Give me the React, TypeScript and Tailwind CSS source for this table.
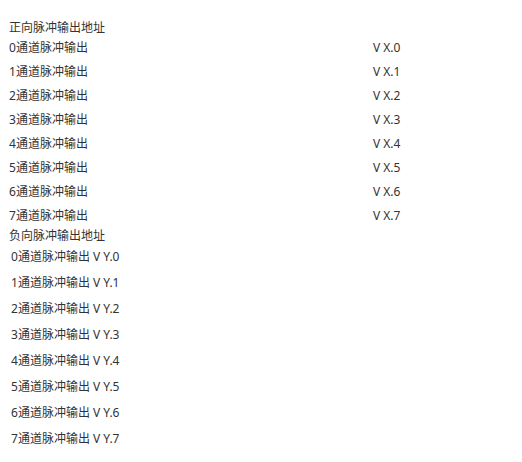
export default function App() {
  const ch = [0, 1, 2, 3, 4, 5, 6, 7];
  return (
    <div
      className="w-[522px] h-[462px] bg-white text-[#333] text-[12px] pt-[20px] pl-[9px]"
      style={{ fontFamily: '"Noto Sans", "Noto Sans CJK SC", sans-serif' }}
    >
      <div className="h-[16px] leading-[16px]">正向脉冲输出地址</div>
      {ch.map((i) => (
        <div key={i} className="flex h-[24px] items-center">
          <div className="w-[364px]">{i}通道脉冲输出</div>
          <div>V X.{i}</div>
        </div>
      ))}
      <div className="h-[16px] leading-[16px]">负向脉冲输出地址</div>
      {ch.map((i) => (
        <div key={i} className="flex h-[26px] items-center pl-[2px]">
          {i}通道脉冲输出 V Y.{i}
        </div>
      ))}
    </div>
  );
}
